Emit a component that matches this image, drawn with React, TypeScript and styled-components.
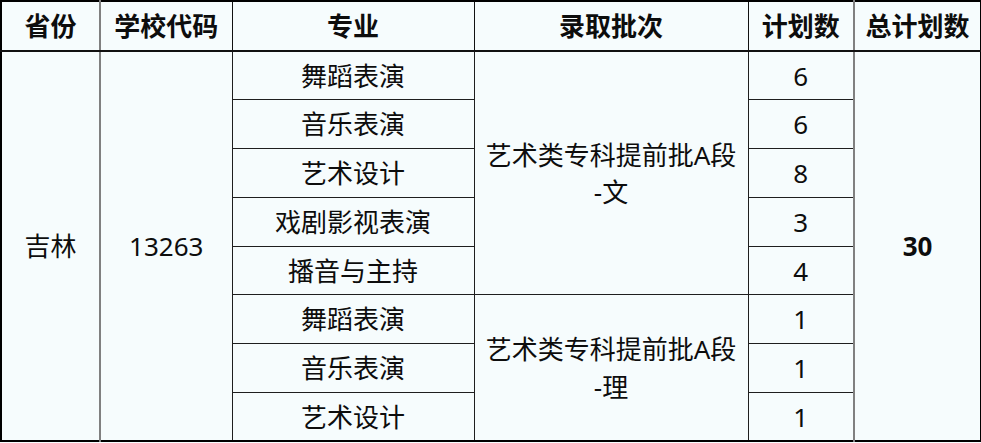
import styled, { createGlobalStyle } from "styled-components";

const GlobalStyle = createGlobalStyle`
  html, body {
    margin: 0;
    padding: 0;
    background: #f6fcfd;
  }
`;

interface Major {
  name: string;
  plan: number;
}

interface Batch {
  title: string;
  suffix: string;
  majors: Major[];
}

const batches: Batch[] = [
  {
    title: "艺术类专科提前批A段",
    suffix: "-文",
    majors: [
      { name: "舞蹈表演", plan: 6 },
      { name: "音乐表演", plan: 6 },
      { name: "艺术设计", plan: 8 },
      { name: "戏剧影视表演", plan: 3 },
      { name: "播音与主持", plan: 4 },
    ],
  },
  {
    title: "艺术类专科提前批A段",
    suffix: "-理",
    majors: [
      { name: "舞蹈表演", plan: 1 },
      { name: "音乐表演", plan: 1 },
      { name: "艺术设计", plan: 1 },
    ],
  },
];

const totalRows = batches.reduce((n, b) => n + b.majors.length, 0);
const totalPlan = batches.reduce(
  (n, b) => n + b.majors.reduce((m, x) => m + x.plan, 0),
  0
);

function App() {
  return (
    <>
      <GlobalStyle />
      <Table>
        <colgroup>
          <col style={{ width: 99 }} />
          <col style={{ width: 132 }} />
          <col style={{ width: 242 }} />
          <col style={{ width: 274 }} />
          <col style={{ width: 106 }} />
          <col style={{ width: 127 }} />
        </colgroup>
        <thead>
          <HeadRow>
            <HeadCell>省份</HeadCell>
            <HeadCell $soft>学校代码</HeadCell>
            <HeadCell>专业</HeadCell>
            <HeadCell>录取批次</HeadCell>
            <HeadCell>计划数</HeadCell>
            <HeadCell $soft>总计划数</HeadCell>
          </HeadRow>
        </thead>
        <tbody>
          {batches.map((batch, bi) =>
            batch.majors.map((m, mi) => (
              <BodyRow key={`${bi}-${mi}`}>
                {bi === 0 && mi === 0 && (
                  <>
                    <Cell rowSpan={totalRows}>吉林</Cell>
                    <Cell rowSpan={totalRows} $soft>
                      13263
                    </Cell>
                  </>
                )}
                <Cell>{m.name}</Cell>
                {mi === 0 && (
                  <BatchCell rowSpan={batch.majors.length}>
                    {batch.title}
                    <br />
                    {batch.suffix}
                  </BatchCell>
                )}
                <Cell>{m.plan}</Cell>
                {bi === 0 && mi === 0 && (
                  <TotalCell rowSpan={totalRows} $soft>
                    {totalPlan}
                  </TotalCell>
                )}
              </BodyRow>
            ))
          )}
        </tbody>
      </Table>
    </>
  );
}

const Table = styled.table`
  width: 980px;
  height: 441px;
  table-layout: fixed;
  border-collapse: collapse;
  border: 2px solid #000;
  background: #f6fcfd;
  font-family: "Noto Sans", "Noto Sans CJK SC", sans-serif;
  font-size: 26px;
  color: #0d0d0d;
`;

const HeadRow = styled.tr`
  height: 50px;
`;

const BodyRow = styled.tr`
  height: 48.8px;
`;

const HeadCell = styled.th<{ $soft?: boolean }>`
  padding: 0;
  text-align: center;
  font-weight: 700;
  line-height: 1;
  border: 1px solid #111;
  border-bottom: 2px solid #111;
  ${({ $soft }) => $soft && "border-left: 2px solid #808080;"}
`;

const Cell = styled.td<{ $soft?: boolean }>`
  padding: 0;
  text-align: center;
  vertical-align: middle;
  line-height: 1;
  border: 1px solid #1e1e1e;
  ${({ $soft }) => $soft && "border-left: 2px solid #808080;"}
`;

const BatchCell = styled(Cell)`
  line-height: 1.45;
  padding: 2px 0 0;
`;

const TotalCell = styled(Cell)`
  font-weight: 700;
`;

export default App;
